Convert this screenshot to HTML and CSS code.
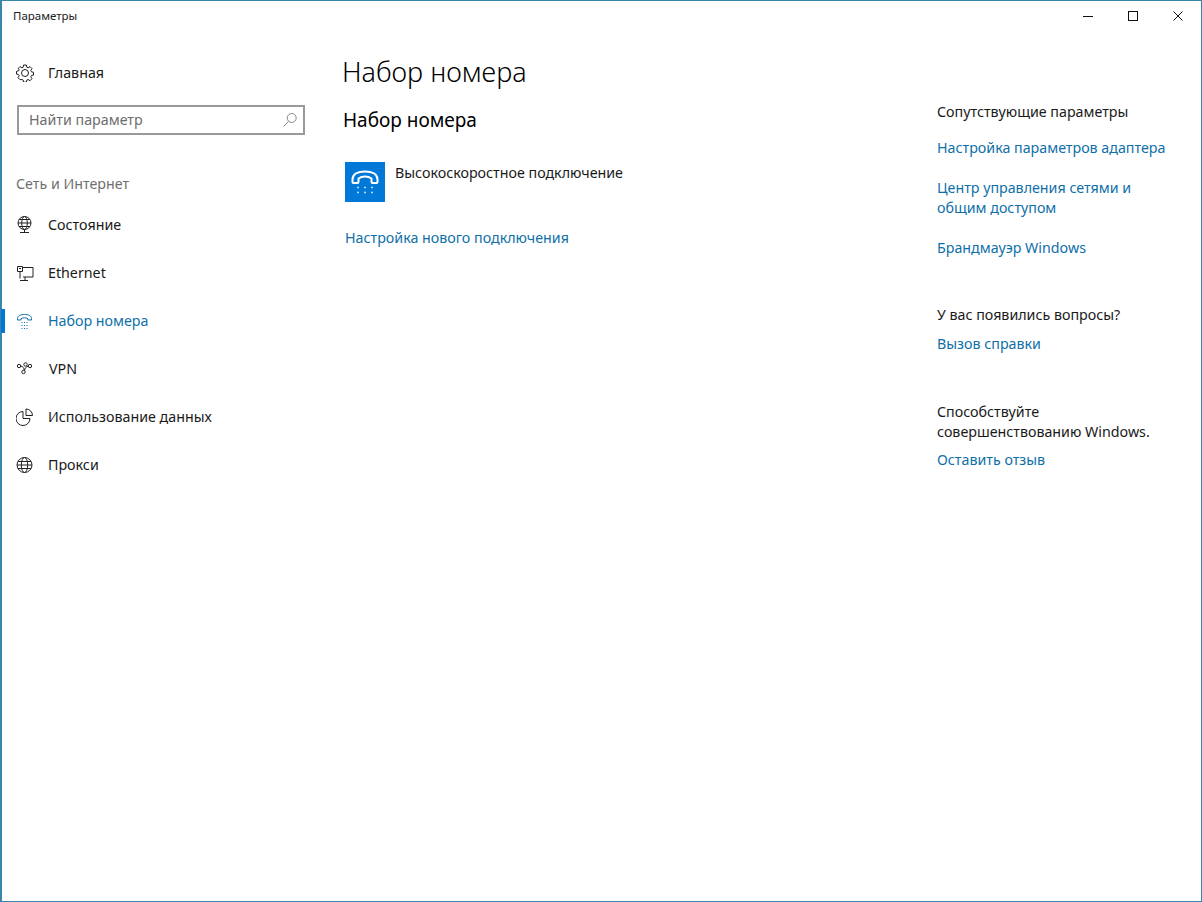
FILE: index.html
```html
<!DOCTYPE html>
<html lang="ru">
<head>
<meta charset="utf-8">
<title>Параметры</title>
<link rel="stylesheet" href="styles.css">
</head>
<body>
<div class="window">
  <header class="titlebar">
    <span class="app-title">Параметры</span>
    <div class="win-controls">
      <span class="win-btn"><svg width="12" height="12" viewBox="0 0 12 12"><path d="M1 6.500h10" class="ln"/></svg></span>
      <span class="win-btn"><svg width="12" height="12" viewBox="0 0 12 12"><rect x="1.500" y="1.500" width="9" height="9" class="ln"/></svg></span>
      <span class="win-btn"><svg width="12" height="12" viewBox="0 0 12 12"><path d="M1.500 1.500l9 9M10.500 1.500l-9 9" class="ln"/></svg></span>
    </div>
  </header>
  <div class="content">
    <aside class="sidebar">
      <div class="nav-item home">
        <span class="nav-icon"><svg width="18" height="18" viewBox="0 0 18 18"><path class="ic" d="M7.600 1h2.800l.4 2.200 1.300.6 1.900-1.200 2 2-1.200 1.900.6 1.300 2.100.5v2.800l-2.100.4-.6 1.300 1.200 1.900-2 2-1.900-1.200-1.300.6-.4 2.100H7.600l-.4-2.100-1.300-.6L4 15.700l-2-2 1.200-1.900-.6-1.300-2.100-.4V7.300l2.100-.5.6-1.300L2 4.600l2-2 1.900 1.200 1.300-.6z"/><circle class="ic" cx="9" cy="9" r="3.500"/></svg></span>
        <span>Главная</span>
      </div>
      <div class="search">
        <span class="search-text">Найти параметр</span>
        <svg width="16" height="16" viewBox="0 0 16 16"><circle class="ic-grey" cx="9.700" cy="6" r="4.500"/><path class="ic-grey" d="M6.500 9.500L1.500 14.500"/></svg>
      </div>
      <div class="nav-group">Сеть и Интернет</div>
      <nav class="nav-list">
        <div class="nav-item">
          <span class="nav-icon"><svg width="18" height="18" viewBox="0 0 18 18"><circle class="ic" cx="8.500" cy="7" r="6.500"/><ellipse class="ic" cx="8.500" cy="7" rx="2.800" ry="6.500"/><path class="ic" d="M2 7h13M3 3.500h11M3 10.500h11M8.500 13.500v3M4 16.500h9"/></svg></span>
          <span>Состояние</span>
        </div>
        <div class="nav-item">
          <span class="nav-icon"><svg width="18" height="18" viewBox="0 0 18 18"><path class="ic" d="M6.500 3.500h10.500v9.500H7M4 16.500h8M9 13v3.500M1.500 2.500h5v5h-5zM4 7.500v7"/><path class="ic" d="M3 4.500h2"/></svg></span>
          <span>Ethernet</span>
        </div>
        <div class="nav-item active">
          <span class="nav-icon"><svg width="18" height="18" viewBox="0 0 18 18"><path class="ic-blue" d="M1.500 8V6.500C1.500 3.500 5 2.500 8.500 2.500s7 1 7 4V8h-3.500V6.800C11 6 9.800 5.800 8.500 5.800S6 6 5 6.800V8z"/><path class="dots" d="M5.500 10.500h1M8 10.500h1M10.500 10.500h1M5.500 13.500h1M8 13.500h1M10.500 13.500h1M5.500 16.500h1M8 16.500h1M10.500 16.500h1"/></svg></span>
          <span>Набор номера</span>
        </div>
        <div class="nav-item vpn">
          <span class="nav-icon"><svg width="18" height="18" viewBox="0 0 18 18"><circle class="ic" cx="3" cy="6" r="1.700"/><circle class="ic" cx="14" cy="6" r="1.700"/><circle class="ic" cx="7.500" cy="12" r="1.700"/><circle class="ic" cx="9.500" cy="4.500" r="1.700"/><path class="ic" d="M4.700 6c2 .3 3.500 2 3.500 4.300M12.300 6c-2 .5-3.300 2-3.800 4.500"/></svg></span>
          <span>VPN</span>
        </div>
        <div class="nav-item">
          <span class="nav-icon"><svg width="18" height="18" viewBox="0 0 18 18"><path class="ic" d="M7 3.500a7 7 0 1 0 7 7H7z"/><path class="ic" d="M10 1a6.500 6.500 0 0 1 6.500 6.500H10z"/></svg></span>
          <span>Использование данных</span>
        </div>
        <div class="nav-item">
          <span class="nav-icon"><svg width="18" height="18" viewBox="0 0 18 18"><circle class="ic" cx="8.500" cy="9" r="7.500"/><ellipse class="ic" cx="8.500" cy="9" rx="3.200" ry="7.500"/><path class="ic" d="M1 9h15M2 5.500h13M2 12.500h13"/></svg></span>
          <span>Прокси</span>
        </div>
      </nav>
    </aside>
    <main class="main">
      <h1 class="page-title">Набор номера</h1>
      <h2 class="section-title">Набор номера</h2>
      <div class="connection">
        <span class="conn-tile"><svg width="28" height="24" viewBox="0 0 28 24"><path class="tile-ln" d="M1.500 12V9.500C1.500 4 7 1.500 14 1.500s12.500 2.500 12.500 8V12a1 1 0 0 1-1 1h-4a1 1 0 0 1-1-1V8.500C18.500 7 16 6.500 14 6.500S9.500 7 7.500 8.500V12a1 1 0 0 1-1 1h-4a1 1 0 0 1-1-1z"/><path class="tile-dots" d="M6.300 17.500h1.500M13.300 17.500h1.500M20.300 17.500h1.500M6.300 22.500h1.500M13.300 22.500h1.500M20.300 22.500h1.500"/></svg></span>
        <span class="conn-name">Высокоскоростное подключение</span>
      </div>
      <a class="link new-conn">Настройка нового подключения</a>
    </main>
    <aside class="related">
      <section class="rel-group rel-first">
        <div class="rel-title">Сопутствующие параметры</div>
        <a class="link rel-link">Настройка параметров адаптера</a>
        <a class="link rel-link">Центр управления сетями и общим доступом</a>
        <a class="link rel-link">Брандмауэр Windows</a>
      </section>
      <section class="rel-group rel-second">
        <div class="rel-title">У вас появились вопросы?</div>
        <a class="link">Вызов справки</a>
      </section>
      <section class="rel-group">
        <div class="rel-title">Способствуйте совершенствованию Windows.</div>
        <a class="link">Оставить отзыв</a>
      </section>
    </aside>
  </div>
</div>
</body>
</html>
```
FILE: styles.css
```css
* { box-sizing: border-box; }
html, body { margin: 0; height: 100%; }
body {
  font-family: "Noto Sans", "Open Sans", sans-serif;
  font-size: 14.25px;
  line-height: 20px;
  color: #1a1a1a;
  background: #fff;
}
.window {
  width: 1202px;
  height: 902px;
  border: 1px solid #3a85a8;
  border-left-width: 2px;
  display: flex;
  flex-direction: column;
}
.titlebar {
  height: 31px;
  padding: 0 0 1px 11px;
  flex: none;
  display: flex;
  justify-content: space-between;
  align-items: center;
}
.app-title { font-size: 11.5px; color: #222; }
.win-controls { display: flex; margin-right: 1px; }
.win-btn { width: 45px; height: 30px; display: flex; align-items: center; justify-content: center; }
.ln { fill: none; stroke: #111; stroke-width: 1; }
.content { flex: 1; display: flex; }
.sidebar { width: 341px; flex: none; position: relative; }
.nav-item { height: 48px; display: flex; align-items: center; padding-left: 14px; }
.home { height: 24px; margin-top: 29px; }
.nav-icon { width: 32px; height: 18px; flex: none; display: block; }
.nav-icon svg { display: block; }
.vpn .nav-icon { width: 33px; }
.ic { fill: none; stroke: #222; stroke-width: 1; }
.ic-grey { fill: none; stroke: #888; stroke-width: 1; }
.ic-blue { fill: none; stroke: #0f6fa8; stroke-width: 1; }
.dots { fill: none; stroke: #0f6fa8; stroke-width: 1; }
.search {
  width: 288px;
  height: 30px;
  margin: 20px 0 0 15px;
  border: 2px solid #999;
  display: flex;
  align-items: center;
  justify-content: space-between;
  padding: 0 5px 0 10px;
}
.search-text { color: #6d6d6d; }
.nav-group { margin: 39px 0 0 14px; color: #707070; }
.nav-list { margin-top: 7px; }
.active { color: #0f6fa8; position: relative; }
.active::before {
  content: "";
  position: absolute;
  left: -1px;
  top: 12px;
  width: 4px;
  height: 24px;
  background: #0078d7;
}
.main { flex: 1; padding-top: 23px; }
.page-title { margin: 0 0 0 -1px; font-size: 27px; font-weight: 300; line-height: 34px; color: #000; }
.section-title { margin: 18px 0 0; font-size: 19px; font-weight: 400; line-height: 26px; color: #000; }
.connection { display: flex; margin: 29px 0 0 2px; }
.conn-tile { width: 40px; height: 40px; background: #0078d7; display: flex; align-items: center; justify-content: center; flex: none; }
.tile-ln { fill: none; stroke: #fff; stroke-width: 2; }
.tile-dots { fill: none; stroke: #fff; stroke-width: 1.5; }
.conn-name { margin: 1px 0 0 10px; }
.link { color: #0f6fa8; display: block; }
.new-conn { margin: 26px 0 0 2px; }
.related { width: 264px; flex: none; padding-top: 70px; }
.rel-group { margin-bottom: 48px; }
.rel-first { margin-bottom: 47px; }
.rel-title { margin-bottom: 8px; width: 240px; }
.rel-first .rel-title { margin-bottom: 16px; }
.rel-second .rel-title { margin-bottom: 9px; }
.rel-link { margin-bottom: 20px; width: 240px; }
.rel-link:last-child { margin-bottom: 0; }
```
